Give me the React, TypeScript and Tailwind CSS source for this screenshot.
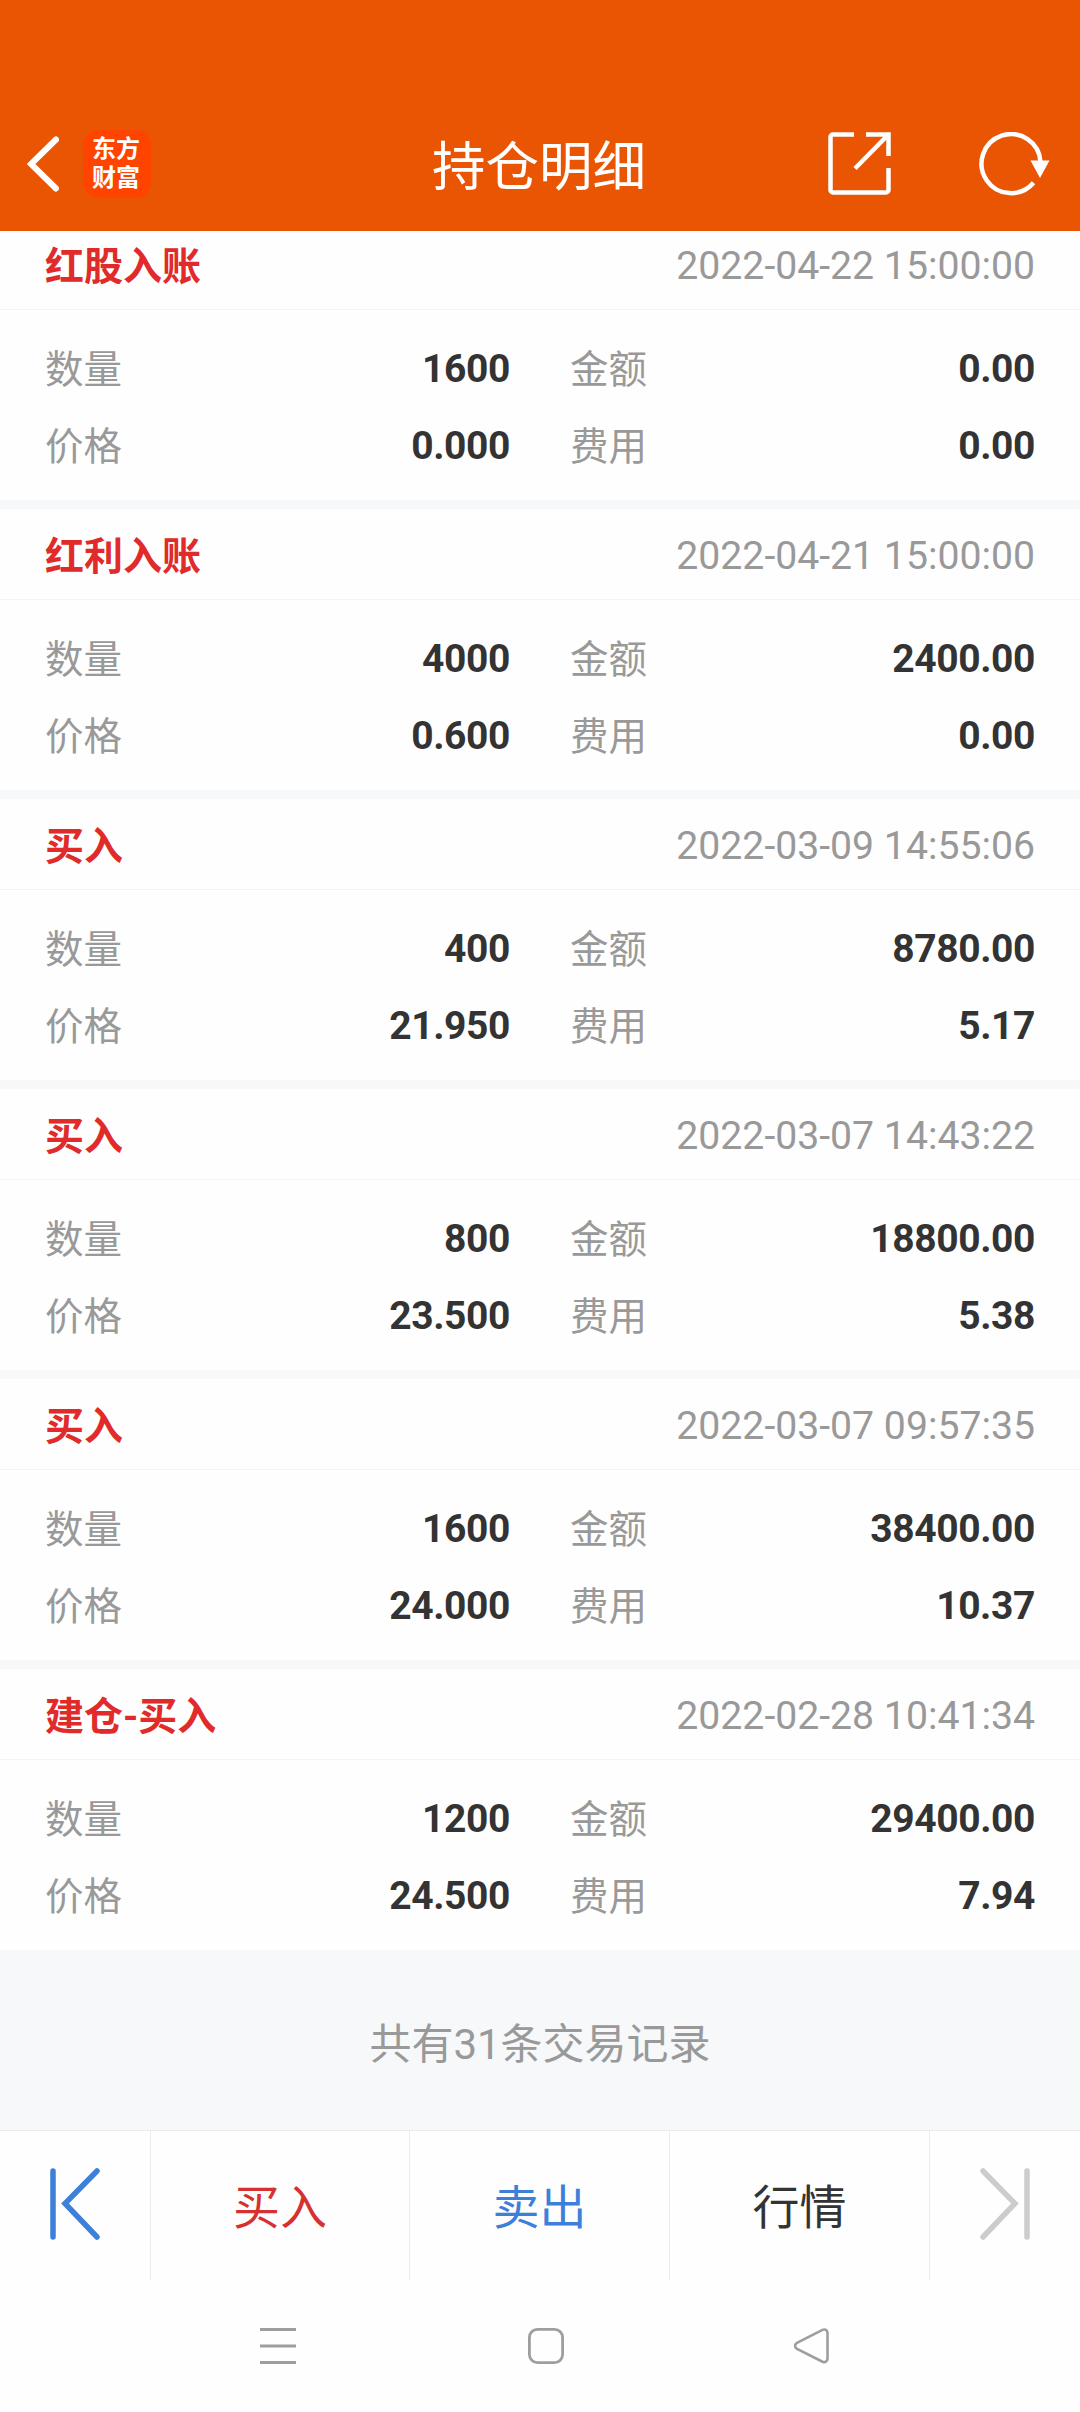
type RecordType = {
  title: string;
  time: string;
  amount: string;
  price: string;
  total: string;
  fee: string;
};

const records: RecordType[] = [
  { title: "红股入账", time: "2022-04-22 15:00:00", amount: "1600", price: "0.000", total: "0.00", fee: "0.00" },
  { title: "红利入账", time: "2022-04-21 15:00:00", amount: "4000", price: "0.600", total: "2400.00", fee: "0.00" },
  { title: "买入", time: "2022-03-09 14:55:06", amount: "400", price: "21.950", total: "8780.00", fee: "5.17" },
  { title: "买入", time: "2022-03-07 14:43:22", amount: "800", price: "23.500", total: "18800.00", fee: "5.38" },
  { title: "买入", time: "2022-03-07 09:57:35", amount: "1600", price: "24.000", total: "38400.00", fee: "10.37" },
  { title: "建仓-买入", time: "2022-02-28 10:41:34", amount: "1200", price: "24.500", total: "29400.00", fee: "7.94" },
];

const Header = () => {
  return (
    <header className="grid h-[231px] shrink-0 grid-cols-[1fr_auto_1fr] items-center bg-[#ea5504] pt-24 text-white">
      <div className="flex items-center pl-[27px]">
        <svg width="32" height="56" viewBox="0 0 32 56" fill="none" stroke="currentColor" strokeWidth="6">
          <path d="M29 3.5 4 28l25 24.5" strokeLinecap="round" />
        </svg>
        <div className="ml-6 flex h-[68px] w-[68px] flex-col items-center justify-center rounded-[15px] bg-[#ff4400] pr-0.5 text-2xl leading-[29px] font-bold">
          <span>东方</span>
          <span>财富</span>
        </div>
      </div>
      <h1 className="pt-2 pr-0.5 text-[53.5px] leading-[60px]">持仓明细</h1>
      <div className="flex items-center justify-end pr-[29px]">
        <svg width="64" height="64" viewBox="0 0 64 64" fill="none" stroke="currentColor" strokeWidth="4.5">
          <path d="M26 2.5H5A2.5 2.5 0 0 0 2.5 5v53A2.5 2.5 0 0 0 5 60.5h53a2.5 2.5 0 0 0 2.5-2.5V36" />
          <path d="M38 2.5h22.5V24M60 3 27 36.5" />
        </svg>
        <svg className="ml-[87px]" width="72" height="64" viewBox="0 0 72 64" fill="none" stroke="currentColor" strokeWidth="4.5">
          <path d="M61.5 30A29.5 29.5 0 1 0 54.5 50.8" />
          <path d="M51.5 28.5h19L61 46z" fill="currentColor" stroke="none" />
        </svg>
      </div>
    </header>
  );
};

const Field = ({ label, value }: { label: string; value: string }) => {
  return (
    <div className="flex h-[77px] items-center justify-between">
      <span className="pt-0.5 text-[38.5px] text-[#999999]">{label}</span>
      <span className="font-bold tracking-[-0.4px] text-[#333333]">{value}</span>
    </div>
  );
};

const RecordCard = ({ record }: { record: RecordType }) => {
  return (
    <div className="bg-[#fefefe] text-[39px] leading-[56px]">
      <div className="flex h-[91px] items-center justify-between border-b border-[#f3f4f6] px-[45px] pt-1">
        <h3 className="pt-0.5 font-bold text-[#e12a2a]">{record.title}</h3>
        <p className="text-[39.2px] text-[#999999]">{record.time}</p>
      </div>
      <div className="grid h-[190px] grid-cols-2 content-start gap-x-[60px] px-[45px] pt-5">
        <Field label="数量" value={record.amount} />
        <Field label="金额" value={record.total} />
        <Field label="价格" value={record.price} />
        <Field label="费用" value={record.fee} />
      </div>
    </div>
  );
};

const TabBar = () => {
  return (
    <nav className="flex h-[150px] shrink-0 divide-x divide-[#ebecee] border-t border-[#ebecee] text-[47px]">
      <button className="flex w-[151px] justify-center pt-[37px] text-[#3d80d9]">
        <svg width="50" height="72" viewBox="0 0 50 72" fill="none" stroke="currentColor" strokeWidth="5.5" strokeLinecap="round">
          <path d="M3 3v66M47 3 15 35.5 47 69" />
        </svg>
      </button>
      <button className="w-[259px] pt-1.5 text-[#d63031]">买入</button>
      <button className="w-[260px] pt-1.5 text-[#3d80d9]">卖出</button>
      <button className="w-[260px] pt-1.5 text-[#333333]">行情</button>
      <button className="flex w-[150px] justify-center pt-[37px] text-[#cccccc]">
        <svg width="50" height="72" viewBox="0 0 50 72" fill="none" stroke="currentColor" strokeWidth="5.5" strokeLinecap="round">
          <path d="M47 3v66M3 3l32 32.5L3 69" />
        </svg>
      </button>
    </nav>
  );
};

const SystemBar = () => {
  return (
    <div className="flex h-[132px] shrink-0 items-start pt-12 pl-[260px] text-[#9e9e9e]">
      <svg width="36" height="36" viewBox="0 0 36 36" stroke="currentColor" strokeWidth="3">
        <path d="M0 1.5h36M0 18h36M0 34.5h36" />
      </svg>
      <svg className="ml-[232px]" width="36" height="36" viewBox="0 0 36 36" fill="none" stroke="currentColor" strokeWidth="2.8">
        <rect x="1.4" y="1.4" width="33.2" height="33.2" rx="8" />
      </svg>
      <svg className="ml-[230px]" width="36" height="36" viewBox="0 0 36 36" fill="none" stroke="currentColor" strokeWidth="2.6">
        <path d="M28.5 1.9 3 14.8c-2.6 1.4-2.6 4.6 0 6l25.5 12.9c2.5 1.1 5-.3 5-3V4.9c0-2.7-2.5-4.1-5-3z" />
      </svg>
    </div>
  );
};

export default function App() {
  return (
    <div className="flex h-[2412px] w-[1080px] flex-col bg-[#fefefe] font-[Roboto,'Noto_Sans_CJK_SC',sans-serif]">
      <Header />
      {/* the list is scrolled a little under the header */}
      <main className="overflow-hidden bg-[#f6f8fa]">
        <div className="-mt-3 flex flex-col gap-[9px]">
          {records.map((record) => (
            <RecordCard key={record.time} record={record} />
          ))}
        </div>
        <p className="flex h-[180px] items-center justify-center pt-2 text-[42px] text-[#999999]">
          共有31条交易记录
        </p>
      </main>
      <TabBar />
      <SystemBar />
    </div>
  );
}
